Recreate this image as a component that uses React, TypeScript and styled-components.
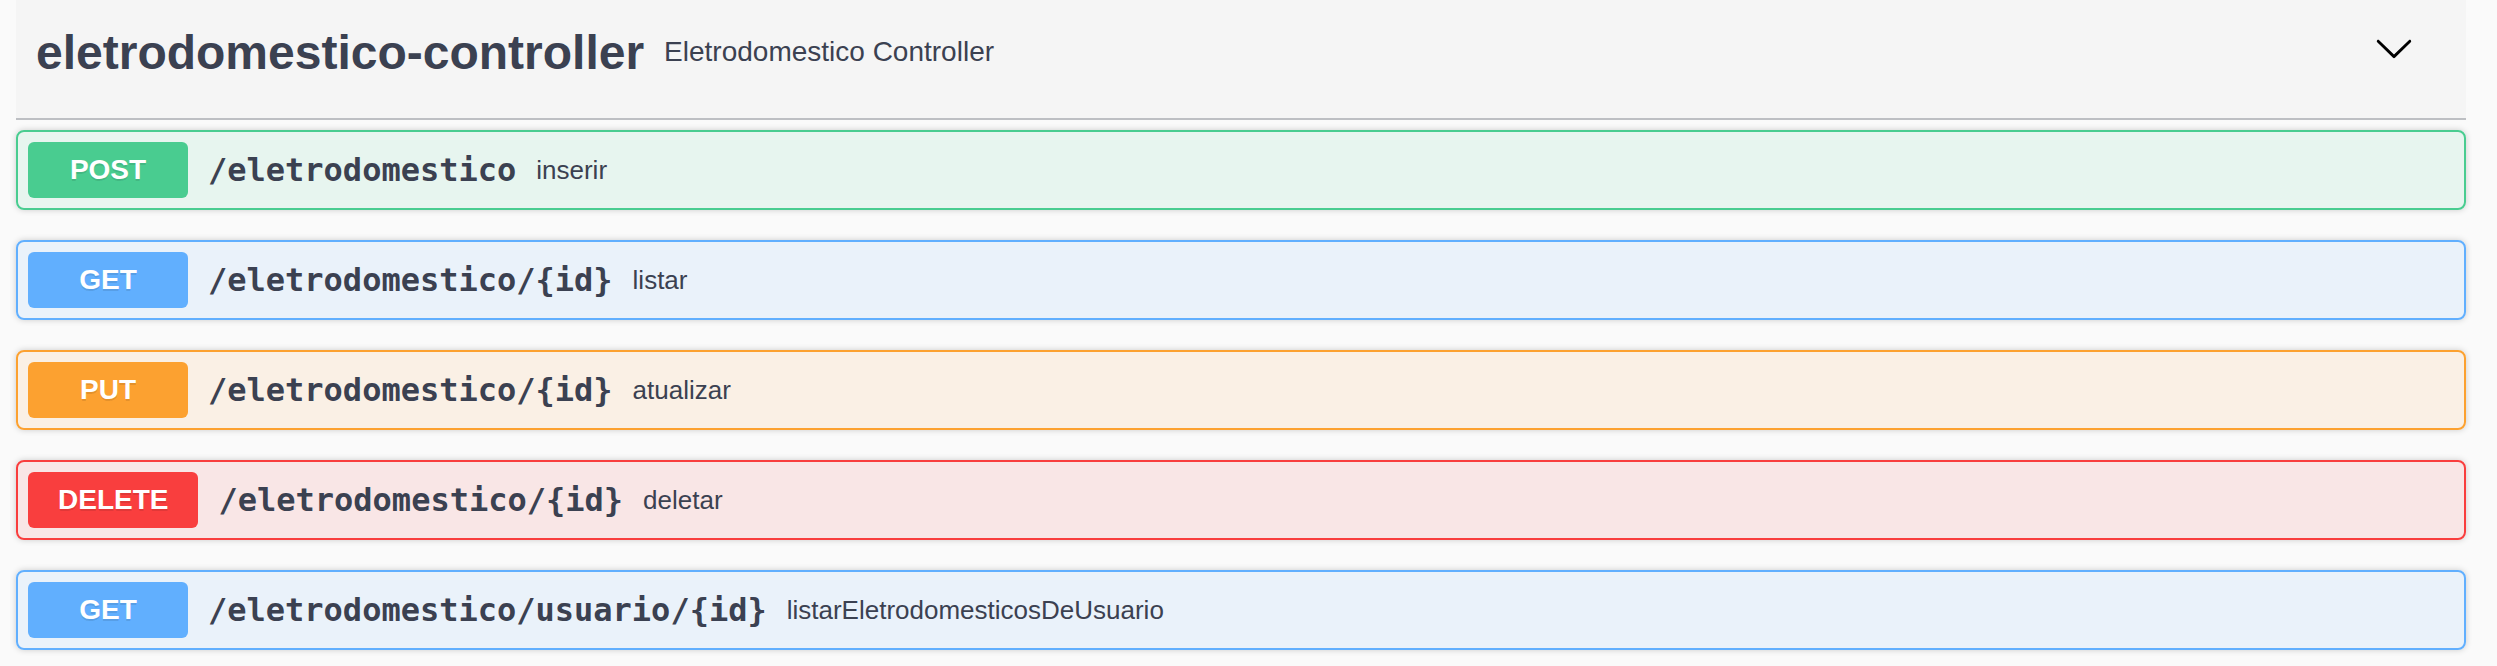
import * as React from "react";
import styled, { createGlobalStyle } from "styled-components";

const GlobalStyle = createGlobalStyle`
  html, body {
    margin: 0;
    padding: 0;
    background: #fafafa;
  }

  * {
    box-sizing: border-box;
  }
`;

type Method = "post" | "get" | "put" | "delete";

const COLORS: Record<Method, { border: string; bg: string }> = {
  post: { border: "#49cc90", bg: "rgba(73, 204, 144, 0.1)" },
  get: { border: "#61affe", bg: "rgba(97, 175, 254, 0.1)" },
  put: { border: "#fca130", bg: "rgba(252, 161, 48, 0.1)" },
  delete: { border: "#f93e3e", bg: "rgba(249, 62, 62, 0.1)" },
};

const Page = styled.div`
  padding: 0 31px 0 16px;
  font-family: "Liberation Sans", Arial, sans-serif;
  color: #3b4151;
`;

const Section = styled.section`
  display: flex;
  flex-direction: column;
`;

const Tag = styled.h3`
  align-items: center;
  background: rgba(0, 0, 0, 0.02);
  border-bottom: 2px solid rgba(59, 65, 81, 0.3);
  display: flex;
  height: 120px;
  margin: 0 0 10px;
  padding: 0 40px 14px 20px;
`;

const TagName = styled.span`
  font-size: 48px;
  font-weight: 700;
  white-space: nowrap;
`;

const TagDescription = styled.small`
  flex: 1;
  font-size: 28px;
  font-weight: 400;
  padding: 0 20px;
`;

const ExpandButton = styled.button`
  background: none;
  border: none;
  display: flex;
  margin: 0 0 9px;
  padding: 2px 12px;
`;

const Operations = styled.div`
  display: flex;
  flex-direction: column;
`;

const Block = styled.div<{ $method: Method }>`
  background: ${(p) => COLORS[p.$method].bg};
  border: 2px solid ${(p) => COLORS[p.$method].border};
  border-radius: 8px;
  box-shadow: 0 0 6px rgba(0, 0, 0, 0.19);
  margin: 0 0 30px;
`;

const Summary = styled.div`
  align-items: center;
  display: flex;
  padding: 10px;
`;

const MethodBadge = styled.span<{ $method: Method }>`
  background: ${(p) => COLORS[p.$method].border};
  border-radius: 6px;
  color: #fff;
  font-size: 28px;
  font-weight: 700;
  min-width: 160px;
  padding: 12px 30px;
  text-align: center;
  text-shadow: 0 2px 0 rgba(0, 0, 0, 0.1);
`;

const Path = styled.span`
  font-family: "DejaVu Sans Mono", "Liberation Mono", monospace;
  font-size: 32px;
  font-weight: 700;
  padding: 0 20px;
`;

const Description = styled.span`
  flex: 1 1 auto;
  font-size: 26px;
`;

const operations: { method: Method; path: string; summary: string }[] = [
  { method: "post", path: "/eletrodomestico", summary: "inserir" },
  { method: "get", path: "/eletrodomestico/{id}", summary: "listar" },
  { method: "put", path: "/eletrodomestico/{id}", summary: "atualizar" },
  { method: "delete", path: "/eletrodomestico/{id}", summary: "deletar" },
  { method: "get", path: "/eletrodomestico/usuario/{id}", summary: "listarEletrodomesticosDeUsuario" },
];

const Arrow = () => (
  <svg width="40" height="40" viewBox="0 0 20 20" aria-hidden="true">
    <path
      fill="#000"
      d="M17.418 6.109c.272-.268.709-.268.979 0s.271.701 0 .969l-7.908 7.83c-.27.268-.707.268-.979 0l-7.908-7.83c-.27-.268-.27-.701 0-.969.271-.268.709-.268.979 0L10 13.25l7.418-7.141z"
    />
  </svg>
);

export default function App() {
  return (
    <Page>
      <GlobalStyle />
      <Section>
        <Tag>
          <TagName>{"eletrodomestico-controller"}</TagName>
          <TagDescription>{"Eletrodomestico Controller"}</TagDescription>
          <ExpandButton>
            <Arrow />
          </ExpandButton>
        </Tag>
        <Operations>
          {operations.map((op, i) => (
            <Block key={i} $method={op.method}>
              <Summary>
                <MethodBadge $method={op.method}>{op.method.toUpperCase()}</MethodBadge>
                <Path>{op.path}</Path>
                <Description>{op.summary}</Description>
              </Summary>
            </Block>
          ))}
        </Operations>
      </Section>
    </Page>
  );
}
